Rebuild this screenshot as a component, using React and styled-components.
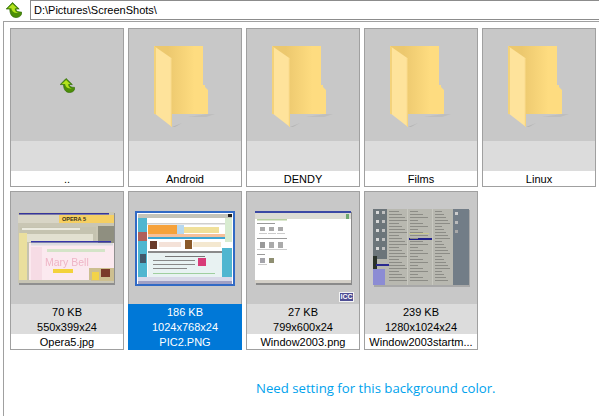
import React from "react";
import styled, { createGlobalStyle } from "styled-components";

const GlobalStyle = createGlobalStyle`
  html, body {
    margin: 0;
    padding: 0;
    background: #ffffff;
  }
  body {
    font-family: "Liberation Sans", Arial, sans-serif;
    overflow: hidden;
  }
`;

const UpArrow = ({ size }) => (
  <svg width={size} height={size} viewBox="0 0 16 16">
    <path
      d="M6.5 0.5 L13.2 7 L10 7 C10 9 11.5 10 15.5 10 L15.5 12 C15 14.3 12.5 15.5 10 15.5 C6 15.5 3.8 12 3.8 7 L0.2 7 Z"
      fill="#4d8f08"
      stroke="#2f6b04"
      strokeWidth="0.7"
    />
    <path d="M6.5 2 L11 6.3 L8.8 6.3 C8.6 9 10 10.6 13 11 C9 11.5 5.8 10 5.4 6.3 L2 6.3 Z" fill="#b4e31c" />
  </svg>
);

const FolderIcon = () => (
  <FolderSvg width="62" height="84" viewBox="0 0 62 84">
    <defs>
      <linearGradient id="folderBack" x1="0" x2="1" y1="0" y2="0">
        <stop offset="0.25" stopColor="#ecc86e" />
        <stop offset="0.75" stopColor="#fedc80" />
      </linearGradient>
    </defs>
    <path d="M54 68 L61 68 L52 71 L34 71 Z" fill="#b9b9b9" opacity="0.7" />
    <path d="M18 81 L28 77 L21 81 Z" fill="#b5b5b5" />
    <path d="M0 0 L49 0 L49 39 L51 39 L51 41 L54 44 L54 68 L0 68 Z" fill="url(#folderBack)" />
    <path d="M0 0 L18 12.5 L18 81 L0 67 Z" fill="#fee39b" />
    <path d="M0 0 L2 1.5 L2 68.5 L0 67 Z" fill="#f3d27b" />
    <path d="M16.8 11.7 L18 12.5 L18 81 L16.8 80 Z" fill="#f5d47f" />
  </FolderSvg>
);

const OperaThumb = () => (
  <svg width="98" height="73" viewBox="0 0 98 73">
    <defs>
      <filter id="soft1"><feGaussianBlur stdDeviation="0.7" /></filter>
    </defs>
    <rect x="1" y="1" width="96" height="72" fill="#8f8f8f" />
    <rect x="0" y="0" width="96" height="71" fill="#c9c6b4" />
    <g filter="url(#soft1)">
      <rect x="1" y="1" width="90" height="1.5" fill="#34349c" />
      <rect x="0" y="3" width="41" height="8" fill="#d8d5c6" />
      <rect x="41" y="3" width="55" height="8" fill="#f5cf62" />
      <rect x="2" y="15" width="76" height="54" fill="#c5c3b0" />
      <rect x="4" y="16" width="58" height="2" fill="#ecebe0" />
      <rect x="80" y="14" width="16" height="32" fill="#8f8f80" />
      <rect x="1" y="21" width="8" height="48" fill="#eadf9e" />
      <rect x="9" y="22" width="66" height="8" fill="#e2e0d0" />
      <rect x="13" y="29" width="80" height="1.5" fill="#3434a8" />
      <rect x="11" y="31" width="85" height="38" fill="#fbe9ef" />
      <rect x="13" y="31" width="82" height="2.5" fill="#dcdce0" />
      <rect x="13" y="35" width="11" height="33" fill="#f6dce5" />
      <rect x="29" y="37" width="58" height="3" fill="#d4e4c8" />
      <rect x="35" y="57" width="20" height="4" fill="#f3d23a" />
      <rect x="71" y="56" width="25" height="13" fill="#cdbf90" />
      <rect x="83" y="57" width="9" height="8" fill="#7a3b2a" />
      <rect x="74" y="60" width="7" height="8" fill="#f2d348" />
      <rect x="1" y="68" width="72" height="3" fill="#c7c4b4" />
    </g>
    <OperaLabel x="44" y="9">OPERA 5</OperaLabel>
    <MaryLabel x="27" y="54" filter="url(#soft1)">Mary Bell</MaryLabel>
  </svg>
);

const PicThumb = () => (
  <svg width="100" height="75" viewBox="0 0 100 75">
    <defs>
      <filter id="soft2"><feGaussianBlur stdDeviation="0.6" /></filter>
    </defs>
    <rect x="0" y="0" width="100" height="75" fill="#316ac5" />
    <rect x="2" y="2" width="96" height="71" fill="#ffffff" />
    <g filter="url(#soft2)">
      <rect x="3" y="3" width="94" height="4" fill="#c4c4ba" />
      <rect x="3" y="7" width="9" height="59" fill="#4fb6d0" />
      <rect x="12" y="12" width="78" height="1.5" fill="#cfcfcf" />
      <rect x="13" y="14" width="29" height="9" fill="#f6a23a" />
      <rect x="42" y="14" width="7" height="9" fill="#b8d8ee" />
      <rect x="49" y="16" width="35" height="6" fill="#f0e09a" />
      <rect x="13" y="23" width="77" height="3" fill="#f6c09a" />
      <rect x="13" y="26" width="77" height="2" fill="#3ca6d4" />
      <rect x="3" y="21" width="9" height="9" fill="#b0605a" />
      <rect x="15" y="30" width="7" height="8" fill="#6b3a2a" />
      <rect x="50" y="29" width="7" height="9" fill="#8a5a2a" />
      <rect x="24" y="31" width="22" height="5" fill="#f4e2d8" />
      <rect x="58" y="31" width="28" height="5" fill="#f4e8d0" />
      <rect x="13" y="40" width="77" height="2" fill="#8a8a8a" />
      <rect x="13" y="42" width="74" height="24" fill="#e8f2f2" />
      <rect x="5" y="43" width="6" height="9" fill="#42586a" />
      <rect x="30" y="45" width="40" height="1" fill="#777" />
      <rect x="18" y="49" width="42" height="1" fill="#888" />
      <rect x="18" y="53" width="42" height="1" fill="#888" />
      <rect x="18" y="57" width="34" height="1" fill="#888" />
      <rect x="18" y="62" width="62" height="1" fill="#9fcf9f" />
      <rect x="63" y="47" width="8" height="8" fill="#d83a78" />
      <rect x="90" y="7" width="7" height="24" fill="#d8ecd0" />
      <rect x="87" y="37" width="10" height="29" fill="#4fb6d0" />
      <rect x="3" y="66" width="94" height="4" fill="#d8d8e8" />
      <rect x="3" y="70" width="94" height="3" fill="#a0a0c4" />
      <rect x="93" y="3" width="4" height="3" fill="#222" />
    </g>
  </svg>
);

const WindowThumb = () => (
  <svg width="97" height="74" viewBox="0 0 97 74">
    <defs>
      <filter id="soft3"><feGaussianBlur stdDeviation="0.5" /></filter>
    </defs>
    <rect x="1" y="1" width="96" height="73" fill="#8a8a8a" />
    <rect x="0" y="0" width="96" height="72" fill="#ffffff" />
    <g filter="url(#soft3)">
      <rect x="0" y="0" width="96" height="2" fill="#3a4aa4" />
      <rect x="0" y="2" width="96" height="6" fill="#dcdcd4" />
      <rect x="91" y="3" width="3" height="5" fill="#70a870" />
      <rect x="2" y="8" width="30" height="1.5" fill="#b8d0a0" />
      <rect x="2" y="12" width="18" height="1" fill="#999" />
      <rect x="5" y="16" width="5" height="4" fill="#aaa" />
      <rect x="14" y="16" width="5" height="4" fill="#aaa" />
      <rect x="23" y="16" width="5" height="4" fill="#aaa" />
      <rect x="4" y="22" width="8" height="1" fill="#ccc" />
      <rect x="13" y="22" width="8" height="1" fill="#ccc" />
      <rect x="22" y="22" width="8" height="1" fill="#ccc" />
      <rect x="2" y="27" width="30" height="1" fill="#999" />
      <rect x="5" y="31" width="5" height="6" fill="#999" />
      <rect x="14" y="31" width="5" height="6" fill="#aaa" />
      <rect x="23" y="31" width="5" height="6" fill="#aaa" />
      <rect x="2" y="38" width="30" height="1" fill="#ccc" />
      <rect x="2" y="43" width="8" height="1" fill="#999" />
      <rect x="5" y="47" width="5" height="5" fill="#a4a4aa" />
      <rect x="14" y="47" width="5" height="5" fill="#8f8f72" />
      <rect x="3" y="53" width="9" height="1" fill="#ccc" />
      <rect x="0" y="69" width="96" height="3" fill="#d4d0c8" />
    </g>
  </svg>
);

const menuRows = Array.from({ length: 24 }, (_, i) => 2 + i * 3);

const StartMenuThumb = () => (
  <svg width="97" height="78" viewBox="0 0 97 78">
    <defs>
      <filter id="soft4"><feGaussianBlur stdDeviation="0.7" /></filter>
    </defs>
    <rect x="1" y="1" width="96" height="77" fill="#a8a8a8" />
    <rect x="0" y="0" width="96" height="76" fill="#b8b8b0" />
    <g filter="url(#soft4)">
      <rect x="0" y="0" width="14" height="50" fill="#6c747a" />
      <rect x="0" y="47" width="4" height="17" fill="#2a322a" />
      <rect x="3" y="55" width="13" height="2" fill="#2a2a90" />
      <rect x="0" y="60" width="12" height="16" fill="#8c8cd4" />
      <rect x="80" y="0" width="16" height="76" fill="#727d87" />
      <rect x="36" y="29" width="24" height="2" fill="#20208c" />
      <rect x="36" y="24" width="20" height="1" fill="#c8c890" />
      {menuRows.map((y, i) => (
        <React.Fragment key={y}>
          <rect x="16" y={y} width={10 + (i % 4) * 3} height="1" fill="#8c8c86" />
          <rect x="37" y={y} width={8 + (i % 3) * 5} height="1" fill="#8c8c86" />
          <rect x="62" y={y} width={7 + (i % 5) * 2} height="1" fill="#8c8c86" />
          {i % 3 === 0 && i < 15 && (
            <>
              <rect x="3" y={y} width="3" height="3" fill="#d8d8d8" />
              <rect x="9" y={y} width="3" height="3" fill="#c0c0c0" />
            </>
          )}
        </React.Fragment>
      ))}
      <rect x="34" y="0" width="1" height="76" fill="#c8c8c0" />
      <rect x="59" y="0" width="1" height="76" fill="#c8c8c0" />
      <rect x="82" y="3" width="3" height="3" fill="#ccc" />
      <rect x="82" y="12" width="3" height="3" fill="#bbb" />
      <rect x="82" y="21" width="3" height="3" fill="#aaa" />
    </g>
  </svg>
);

const entries = [
  { preview: <UpArrow size={15} />, name: ".." },
  { preview: <FolderIcon />, name: "Android" },
  { preview: <FolderIcon />, name: "DENDY" },
  { preview: <FolderIcon />, name: "Films" },
  { preview: <FolderIcon />, name: "Linux" },
  { preview: <OperaThumb />, name: "Opera5.jpg", size: "70 KB", dims: "550x399x24" },
  { preview: <PicThumb />, name: "PIC2.PNG", size: "186 KB", dims: "1024x768x24", selected: true },
  { preview: <WindowThumb />, name: "Window2003.png", size: "27 KB", dims: "799x600x24", icc: true },
  { preview: <StartMenuThumb />, name: "Window2003startm...", size: "239 KB", dims: "1280x1024x24" },
];

export default function App() {
  return (
    <Page>
      <GlobalStyle />
      <Toolbar>
        <UpButton>
          <UpArrow size={16} />
        </UpButton>
        <PathField>D:\Pictures\ScreenShots\</PathField>
      </Toolbar>
      <Panel>
        <Grid>
          {entries.map(entry => (
            <Tile key={entry.name}>
              <Preview>
                {entry.preview}
                {entry.icc && <IccBadge>ICC</IccBadge>}
              </Preview>
              <InfoBlock $selected={entry.selected}>
                <InfoLine>{entry.size}</InfoLine>
                <InfoLine>{entry.dims}</InfoLine>
              </InfoBlock>
              <FileName $selected={entry.selected}>{entry.name}</FileName>
            </Tile>
          ))}
        </Grid>
        <Notice>Need setting for this background color.</Notice>
      </Panel>
    </Page>
  );
}

const Page = styled.div`
  width: 599px;
  height: 416px;
  background: #ffffff;
  overflow: hidden;
`;

const Toolbar = styled.div`
  display: flex;
  height: 20px;
  margin-bottom: 1px;
`;

const UpButton = styled.div`
  width: 30px;
  display: flex;
  align-items: center;
  justify-content: center;
  padding-right: 3px;
  box-sizing: border-box;
`;

const PathField = styled.div`
  flex: 1;
  box-sizing: border-box;
  border: 1px solid #8c8c8c;
  border-right: none;
  padding-left: 3px;
  font-size: 11px;
  line-height: 19px;
  color: #000000;
`;

const Panel = styled.div`
  height: 395px;
  box-sizing: border-box;
  margin-left: 3px;
  border-top: 1px solid #a0a0a0;
  border-left: 1px solid #a0a0a0;
  padding: 6px 0 0 6px;
`;

const Grid = styled.div`
  display: flex;
  flex-wrap: wrap;
  gap: 4px;
  width: 590px;
`;

const Tile = styled.div`
  width: 114px;
  height: 159px;
  box-sizing: border-box;
  border: 1px solid #a0a0a0;
  background: #ffffff;
  display: flex;
  flex-direction: column;
  font-size: 11px;
  text-align: center;
`;

const Preview = styled.div`
  position: relative;
  height: 112px;
  flex: none;
  background: #c8c8c8;
  display: flex;
  align-items: center;
  justify-content: center;
`;

const FolderSvg = styled.svg`
  margin-top: 6px;
`;

const OperaLabel = styled.text`
  font-family: "Liberation Sans", sans-serif;
  font-size: 5.5px;
  font-weight: 700;
  fill: #3a3216;
`;

const MaryLabel = styled.text`
  font-family: "Liberation Sans", sans-serif;
  font-size: 10.5px;
  fill: #efb4c6;
`;

const IccBadge = styled.span`
  position: absolute;
  right: 5px;
  bottom: 2px;
  width: 15px;
  height: 10px;
  box-sizing: border-box;
  border: 1px solid #f4f4f4;
  background: #4e4e94;
  color: #ffffff;
  font-size: 7px;
  font-weight: 700;
  line-height: 8px;
  text-align: center;
`;

const InfoBlock = styled.div`
  height: 30px;
  flex: none;
  margin: ${props => (props.$selected ? "0 -1px" : "0")};
  background: ${props => (props.$selected ? "#0078d7" : "#dcdcdc")};
  color: ${props => (props.$selected ? "#ffffff" : "#000000")};
`;

const InfoLine = styled.div`
  height: 15px;
  line-height: 17px;
`;

const FileName = styled.div`
  flex: 1;
  margin: ${props => (props.$selected ? "0 -1px -1px" : "0")};
  line-height: 17px;
  background: ${props => (props.$selected ? "#0078d7" : "#ffffff")};
  color: ${props => (props.$selected ? "#ffffff" : "#000000")};
  white-space: nowrap;
  overflow: hidden;
`;

const Notice = styled.div`
  margin: 29px 0 0 246px;
  font-family: "Open Sans", sans-serif;
  font-size: 13.2px;
  line-height: 18px;
  color: #00a2ed;
  white-space: nowrap;
`;
